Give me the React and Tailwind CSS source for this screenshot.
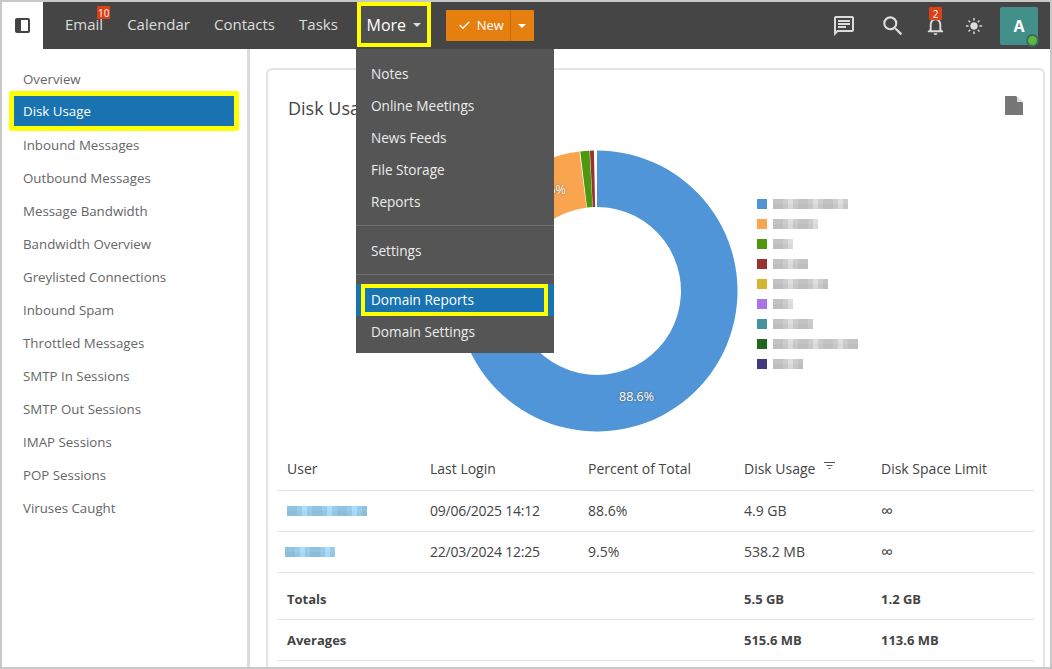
import { Check } from "lucide-react";
import { MdOutlineChat, MdSearch, MdOutlineNotifications, MdLightMode } from "react-icons/md";

const NAV = ["Calendar", "Contacts", "Tasks"];
const SIDE = [
  "Overview", "Disk Usage", "Inbound Messages", "Outbound Messages", "Message Bandwidth",
  "Bandwidth Overview", "Greylisted Connections", "Inbound Spam", "Throttled Messages",
  "SMTP In Sessions", "SMTP Out Sessions", "IMAP Sessions", "POP Sessions", "Viruses Caught",
];
const SLICES = [
  { from: 0, to: 88.55, color: "#4f95d7" },
  { from: 88.65, to: 98, color: "#f9a54f" },
  { from: 98.1, to: 99.15, color: "#4d980f" },
  { from: 99.2, to: 99.65, color: "#9c3131" },
];
const LEGEND = [
  ["#4f95d7", 15], ["#f9a54f", 9], ["#4d980f", 4], ["#9c3131", 7], ["#d6b52f", 11],
  ["#a974ea", 4], ["#46929f", 8], ["#1d6a1f", 17], ["#403a80", 6],
];

// 파이 조각 하나. 퍼센트를 각도로 바꿔 도넛 호를 그린다.
function arc(from, to, R = 140.5, r = 84, cx = 141, cy = 141) {
  const pt = (p, rad) => {
    const a = (p / 100) * Math.PI * 2 - Math.PI / 2;
    return `${(cx + rad * Math.cos(a)).toFixed(2)} ${(cy + rad * Math.sin(a)).toFixed(2)}`;
  };
  const big = to - from > 50 ? 1 : 0;
  return `M${pt(from, R)} A${R} ${R} 0 ${big} 1 ${pt(to, R)} L${pt(to, r)} A${r} ${r} 0 ${big} 0 ${pt(from, r)} Z`;
}

// 모자이크 처리된 글자. 칸 농도는 고정된 수식으로 만든다.
function Mosaic({ cols, base = 190, tint = false, className = "" }) {
  const cells = [];
  for (let row = 0; row < 2; row++) {
    for (let col = 0; col < cols; col++) {
      const v = base + ((col * 7 + row * 11 + col * col * 3) % 5) * 9 - (row ? 14 : 0);
      const fill = tint ? `rgb(${v - 60},${v - 10},${v + 20})` : `rgb(${v},${v},${v})`;
      cells.push(<rect key={`${row}-${col}`} x={col * 5} y={row * 5} width="5" height="5" fill={fill} />);
    }
  }
  return (
    <svg width={cols * 5} height="10" className={className}>
      {cells}
    </svg>
  );
}

function Caret({ className = "" }) {
  return (
    <svg width="8" height="4" viewBox="0 0 8 4" className={className}>
      <path d="M0 0h8L4 4z" fill="currentColor" />
    </svg>
  );
}

function Badge({ children, className = "" }) {
  return (
    <span className={`absolute flex h-[13px] items-center justify-center rounded-[1px] bg-[#dd4015] text-[10px] leading-none text-white ${className}`}>
      {children}
    </span>
  );
}

function TopBar() {
  return (
    <header className="flex h-[47px] shrink-0 items-stretch bg-[#454545] text-[#dcdcdc]">
      <div className="flex w-[41px] items-center justify-center bg-white">
        <svg width="15" height="15" viewBox="0 0 15 15">
          <rect width="15" height="15" rx="2" fill="#444" />
          <rect x="6" y="2" width="7" height="11" fill="#fff" />
        </svg>
      </div>
      <nav className="mb-[2px] flex items-center pl-[22px] text-[15px]">
        <span className="relative mr-[24px]">
          Email
          <Badge className="-top-[7px] -right-[7px] w-[13px] text-[9px]">10</Badge>
        </span>
        {NAV.map((n) => (
          <span key={n} className="mr-[24px]">{n}</span>
        ))}
      </nav>
      <div className="-ml-[5px] flex h-[45px] w-[74px] items-center justify-center gap-[7px] border-[4px] border-[#ffff00] bg-[#505050] text-[16px] text-white">
        More <Caret className="text-[#dcdcdc]" />
      </div>
      <div className="ml-[15px] mt-[8px] flex h-[31px] w-[88px] rounded-[1px] bg-[#e57f10] text-[13px] text-white">
        <span className="flex flex-1 items-center justify-center gap-[6px] border-r border-[#c46c0c] pl-[6px]">
          <Check size={13} strokeWidth={2.5} /> New
        </span>
        <span className="flex w-[23px] items-center justify-center"><Caret /></span>
      </div>
      <div className="ml-auto flex items-center pr-[12px]">
        <MdOutlineChat size={24} className="mr-[24px]" />
        <MdSearch size={26} className="mr-[18px]" />
        <span className="relative mr-[18px]">
          <MdOutlineNotifications size={23} />
          <Badge className="-top-[7px] left-[5px] w-[13px]">2</Badge>
        </span>
        <MdLightMode size={18} className="mr-[17px]" />
        <div className="relative flex h-[38px] w-[38px] items-center justify-center rounded-[2px] bg-[#43908a] text-[16px] font-bold text-white">
          A
          <span className="absolute -bottom-[2px] -right-[1px] h-[13px] w-[13px] rounded-full border-2 border-[#3c6b66] bg-[#5db93c]" />
        </div>
      </div>
    </header>
  );
}

function MoreMenu() {
  const item = "flex h-[32px] items-center pl-[15px]";
  return (
    <div className="absolute left-[354px] top-[47px] flex w-[198px] flex-col bg-[#555555] pt-[9px] text-[13.6px] text-[#ececec]">
      {["Notes", "Online Meetings", "News Feeds", "File Storage", "Reports"].map((m) => (
        <div key={m} className={item}>{m}</div>
      ))}
      <div className="mb-[9px] mt-[7px] border-t border-[#707070]" />
      <div className={item}>Settings</div>
      <div className="mb-[9px] mt-[7px] border-t border-[#707070]" />
      <div className="flex h-[32px] items-center bg-[#1873b0] px-[5px]">
        <div className="flex h-[32px] w-[187px] items-center border-[4px] border-[#ffff00] pl-[6px] text-white">
          Domain Reports
        </div>
      </div>
      <div className={item}>Domain Settings</div>
      <div className="h-[5px]" />
    </div>
  );
}

function Sidebar() {
  return (
    <aside className="flex w-[248px] shrink-0 flex-col border-r-[3px] border-[#dcdcdc] pl-[7px] pt-[14px] text-[13.3px] text-[#666]">
      {SIDE.map((s) =>
        s === "Disk Usage" ? (
          <div key={s} className="-mb-[2px] -mt-[5px] flex h-[40px] w-[230px] items-center rounded-[2px] border-[5px] border-[#ffff00] bg-[#1873b0] pl-[9px] pt-[1px] text-[13.3px] text-white">
            {s}
          </div>
        ) : (
          <div key={s} className="flex h-[33px] items-center pl-[14px]">{s}</div>
        ),
      )}
    </aside>
  );
}

function Donut() {
  return (
    <div className="relative h-[282px] w-[282px]">
      <svg width="282" height="282">
        {SLICES.map((s) => (
          <path key={s.color} d={arc(s.from, s.to)} fill={s.color} />
        ))}
      </svg>
      <span className="absolute left-[163px] top-[238px] text-[12.5px] text-white [text-shadow:0_0_2px_#555]">88.6%</span>
      <span className="absolute left-[82px] top-[31px] text-[12.5px] text-white [text-shadow:0_0_2px_#555]">9.5%</span>
    </div>
  );
}

function UsageTable() {
  const cell = "px-[10px] text-left font-normal";
  const bold = "px-[10px] text-left text-[13px] font-bold";
  const row = "h-[41px] border-b border-[#e2e2e2]";
  return (
    <table className="w-[757px] table-fixed border-collapse text-[14px] text-[#444]">
      <colgroup>
        <col className="w-[143px]" />
        <col className="w-[158px]" />
        <col className="w-[156px]" />
        <col className="w-[137px]" />
        <col className="w-[163px]" />
      </colgroup>
      <thead>
        <tr className="h-[38px] border-b border-[#e2e2e2]">
          <th className={`${cell} pb-[4px]`}>User</th>
          <th className={`${cell} pb-[4px]`}>Last Login</th>
          <th className={`${cell} pb-[4px]`}>Percent of Total</th>
          <th className={`${cell} pb-[4px]`}>
            <span className="flex items-center gap-[9px]">
              Disk Usage
              <svg width="11" height="7" viewBox="0 0 11 7" className="-mt-[6px]">
                <path d="M0 .5h11M2.5 3.5h6M4.5 6.5h2" stroke="#555" fill="none" />
              </svg>
            </span>
          </th>
          <th className={`${cell} pb-[4px]`}>Disk Space Limit</th>
        </tr>
      </thead>
      <tbody>
        <tr className={row}>
          <td className={cell}><Mosaic cols={16} base={205} tint className="blur-[0.5px]" /></td>
          <td className={`${cell} tracking-[-0.25px]`}>09/06/2025 14:12</td>
          <td className={cell}>88.6%</td>
          <td className={cell}>4.9 GB</td>
          <td className={`${cell} text-[17px]`}>∞</td>
        </tr>
        <tr className={row}>
          <td className="px-[8px]"><Mosaic cols={10} base={205} tint className="blur-[0.5px]" /></td>
          <td className={`${cell} tracking-[-0.25px]`}>22/03/2024 12:25</td>
          <td className={cell}>9.5%</td>
          <td className={cell}>538.2 MB</td>
          <td className={`${cell} text-[17px]`}>∞</td>
        </tr>
        <tr className="h-[47px] border-b border-[#e2e2e2]">
          <td className={`${bold} pt-[8px]`}>Totals</td>
          <td />
          <td />
          <td className={`${bold} pt-[8px]`}>5.5 GB</td>
          <td className={`${bold} pt-[8px]`}>1.2 GB</td>
        </tr>
        <tr className={row}>
          <td className={`${bold} pt-[2px]`}>Averages</td>
          <td />
          <td />
          <td className={`${bold} pt-[2px]`}>515.6 MB</td>
          <td className={`${bold} pt-[2px]`}>113.6 MB</td>
        </tr>
      </tbody>
    </table>
  );
}

export default function App() {
  return (
    <div className="relative flex h-[669px] w-[1052px] flex-col overflow-hidden border-2 border-[#c8c8c8] bg-white font-['Open_Sans','Noto_Sans',sans-serif]">
      <TopBar />
      <div className="flex min-h-0 flex-1">
        <Sidebar />
        <main className="min-w-0 flex-1 pl-[16px] pr-[5px] pt-[19px]">
          <section className="h-[640px] rounded-[6px] border-2 border-[#e4e4e4] px-[9px]">
            <div className="flex h-[80px] items-start justify-between pl-[11px] pr-[11px] pt-[26px]">
              <h2 className="text-[18px] leading-[24px] text-[#444]">Disk Usage</h2>
              <svg width="18" height="19" viewBox="0 0 18 19">
                <path d="M0 0h11l7 7v12H0z" fill="#777" />
                <path d="M12 0l6 6h-6z" fill="#ddd" />
              </svg>
            </div>
            <div className="flex items-center pl-[179px]">
              <Donut />
              <ul className="mb-[14px] ml-[19px] flex flex-col gap-[10px]">
                {LEGEND.map(([c, w], i) => (
                  <li key={i} className="flex h-[10px] items-center gap-[6px]">
                    <span className="h-[10px] w-[10px]" style={{ backgroundColor: c }} />
                    <Mosaic cols={w} base={195} className="blur-[0.4px]" />
                  </li>
                ))}
              </ul>
            </div>
            <div className="mt-[20px]">
              <UsageTable />
            </div>
          </section>
        </main>
      </div>
      <MoreMenu />
    </div>
  );
}
